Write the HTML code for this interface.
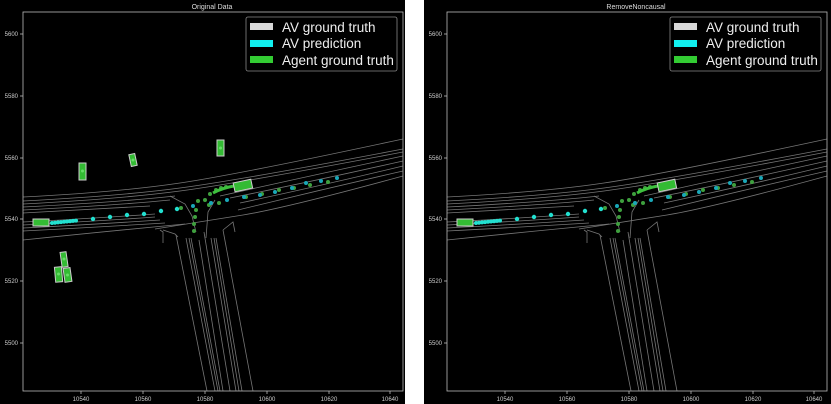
<!DOCTYPE html>
<html><head><style>
html,body{margin:0;padding:0;background:#000;}
svg{display:block;}
text{font-family:"Liberation Sans","DejaVu Sans",sans-serif;}
</style></head><body>
<svg width="831" height="404" viewBox="0 0 831 404" xmlns="http://www.w3.org/2000/svg">
<rect width="831" height="404" fill="#000"/>
<rect x="405" y="0" width="19" height="404" fill="#fff"/>
<defs>
<clipPath id="cp"><rect x="23" y="12" width="380" height="379"/></clipPath>
<g id="roads" fill="none" stroke="#767676" stroke-width="0.8">
 <path d="M23,197 Q120,192 180,183 T403,139"/>
 <path d="M23,201 Q120,196 180,188 T403,149"/>
 <path d="M23,204 Q120,199 180,191 T403,152"/>
 <path d="M23,207 Q120,202 175,196"/>
 <path d="M23,210 Q120,205 170,200"/>
 <path d="M23,213 Q100,209 150,206"/>
 <path d="M220,196 Q300,178 403,156"/>
 <path d="M230,198 Q310,182 403,161"/>
 <path d="M240,203 Q320,186 403,166"/>
 <path d="M238,210 Q320,190 403,171"/>
 <path d="M23,222 Q100,218 155,214"/>
 <path d="M23,225 Q100,221 155,217"/>
 <path d="M23,228 Q100,224 160,220"/>
 <path d="M23,231 Q100,227 165,223"/>
 <path d="M155,229 Q200,222 243,215 T403,176"/>
 <path d="M23,240 Q100,232 185,224"/>
 <path d="M170,196 L185,204 L192,216 L196,232"/>
 <path d="M215,200 L208,212 L206,238"/>
 <path d="M160,230 L163,232 L163,243"/>
 <path d="M163,230 L175,234 L178,237"/>
 <path d="M223,230 L233,222 L235,232"/>
 <path d="M176,235 L207,391"/>
 <path d="M186,238 L215,391"/>
 <path d="M189,238 L218,391"/>
 <path d="M191,238 L220,391"/>
 <path d="M199,240 L223,391"/>
 <path d="M204,232 L230,391"/>
 <path d="M211,238 L236,391"/>
 <path d="M214,238 L239,391"/>
 <path d="M216,238 L242,391"/>
 <path d="M223,230 L253,391"/>
</g>
<g id="av">
 <rect x="33" y="219" width="16" height="7" fill="#33bb33" stroke="#ccc" stroke-width="1"/>
 <g fill="#22e0d0">
  <circle cx="52" cy="223" r="2"/><circle cx="55" cy="222.7" r="2"/><circle cx="58" cy="222.4" r="2"/><circle cx="61" cy="222.1" r="2"/><circle cx="64" cy="221.8" r="2"/><circle cx="67" cy="221.5" r="2"/><circle cx="70" cy="221.2" r="2"/><circle cx="73" cy="220.9" r="2"/><circle cx="76" cy="220.6" r="2"/>
  <circle cx="93" cy="219" r="2.2"/><circle cx="110" cy="217" r="2.2"/><circle cx="127" cy="215" r="2.2"/><circle cx="144" cy="214" r="2.2"/><circle cx="161" cy="211" r="2.2"/><circle cx="177" cy="209" r="2.2"/>
 </g>
 <g fill="#1aa8b8">
  <circle cx="193" cy="206" r="2"/><circle cx="211" cy="203" r="2"/><circle cx="227" cy="200" r="2"/><circle cx="244" cy="197" r="2"/><circle cx="260" cy="195" r="2"/><circle cx="275" cy="192" r="2"/><circle cx="292" cy="188" r="2"/><circle cx="306" cy="183" r="2"/><circle cx="321" cy="181" r="2"/><circle cx="337" cy="178" r="2"/>
 </g>
</g>
<g id="agent">
 <g fill="#3ea03e">
  <circle cx="205" cy="200" r="2"/><circle cx="210" cy="194" r="2"/><circle cx="216" cy="190" r="2"/><circle cx="221" cy="188" r="2"/><circle cx="226" cy="187" r="2"/>
  <circle cx="196" cy="210" r="2"/><circle cx="195" cy="217" r="2"/><circle cx="194" cy="224" r="2"/><circle cx="194" cy="231" r="2"/>
  <circle cx="209" cy="205" r="2"/><circle cx="219" cy="203" r="2"/><circle cx="198" cy="201" r="2"/><circle cx="181" cy="208" r="2"/>
  <circle cx="246" cy="197" r="2"/><circle cx="262" cy="194" r="2"/><circle cx="279" cy="190" r="2"/><circle cx="294" cy="188" r="2"/><circle cx="310" cy="185" r="2"/><circle cx="328" cy="182" r="2"/>
 </g>
 <path d="M213,193 Q222,188 234,186" stroke="#3ec03e" stroke-width="3" fill="none"/>
 <rect x="234" y="181" width="18" height="9" fill="#33bb33" stroke="#ccc" stroke-width="1" transform="rotate(-12 243 186)"/>
</g>
</defs>

<!-- Left panel -->
<text x="212" y="9" font-size="7" fill="#ddd" text-anchor="middle">Original Data</text>
<g clip-path="url(#cp)">
 <use href="#roads"/>
 <use href="#agent"/>
 <use href="#av"/>
 <g fill="#33bb33" stroke="#ccc" stroke-width="1">
  <rect x="79" y="163" width="7" height="17"/>
  <rect x="130" y="154" width="6" height="12" transform="rotate(-12 133 160)"/>
  <rect x="217" y="140" width="7" height="16"/>
  <rect x="61" y="252" width="6" height="15" transform="rotate(-8 64 259)"/>
  <rect x="55" y="267" width="7" height="15" transform="rotate(-5 58 274)"/>
  <rect x="64" y="268" width="7" height="14" transform="rotate(-8 67 275)"/>
 </g>
 <g fill="#66dd66"><circle cx="82.5" cy="171" r="1.5"/><circle cx="133" cy="160" r="1.5"/><circle cx="220.5" cy="148" r="1.5"/><circle cx="64" cy="259" r="1.5"/><circle cx="58.5" cy="274" r="1.5"/><circle cx="67.5" cy="275" r="1.5"/></g>
</g>
<rect x="23" y="12" width="380" height="379" fill="none" stroke="#bbb" stroke-width="0.8"/>
<g id="ticks" font-size="6" fill="#ccc">
 <g stroke="#bbb" stroke-width="0.8">
  <line x1="20" y1="34" x2="23" y2="34"/><line x1="20" y1="96" x2="23" y2="96"/><line x1="20" y1="158" x2="23" y2="158"/><line x1="20" y1="219" x2="23" y2="219"/><line x1="20" y1="281" x2="23" y2="281"/><line x1="20" y1="343" x2="23" y2="343"/>
  <line x1="81" y1="391" x2="81" y2="394"/><line x1="143" y1="391" x2="143" y2="394"/><line x1="205" y1="391" x2="205" y2="394"/><line x1="267" y1="391" x2="267" y2="394"/><line x1="329" y1="391" x2="329" y2="394"/><line x1="390" y1="391" x2="390" y2="394"/>
 </g>
 <g text-anchor="end"><text x="18" y="36">5600</text><text x="18" y="98">5580</text><text x="18" y="160">5560</text><text x="18" y="221">5540</text><text x="18" y="283">5520</text><text x="18" y="345">5500</text></g>
 <g text-anchor="middle"><text x="81" y="401">10540</text><text x="143" y="401">10560</text><text x="205" y="401">10580</text><text x="267" y="401">10600</text><text x="329" y="401">10620</text><text x="390" y="401">10640</text></g>
</g>
<g id="legend">
 <rect x="246" y="17" width="151" height="54" rx="2" fill="#000" stroke="#888" stroke-width="0.8"/>
 <rect x="250" y="23" width="23" height="7" fill="#d8d8d8"/>
 <rect x="250" y="40" width="23" height="7" fill="#11f0f0"/>
 <rect x="250" y="56" width="23" height="7" fill="#33cc33"/>
 <g font-size="13.5" fill="#eee"><text x="282" y="32">AV ground truth</text><text x="282" y="48">AV prediction</text><text x="282" y="65">Agent ground truth</text></g>
</g>

<!-- Right panel -->
<g transform="translate(424,0)">
 <text x="212" y="9" font-size="7" fill="#ddd" text-anchor="middle">RemoveNoncausal</text>
 <g clip-path="url(#cp)">
  <use href="#roads"/>
  <use href="#agent"/>
  <use href="#av"/>
 </g>
 <rect x="23" y="12" width="380" height="379" fill="none" stroke="#bbb" stroke-width="0.8"/>
 <use href="#ticks"/>
 <use href="#legend"/>
</g>
</svg>
</body></html>
